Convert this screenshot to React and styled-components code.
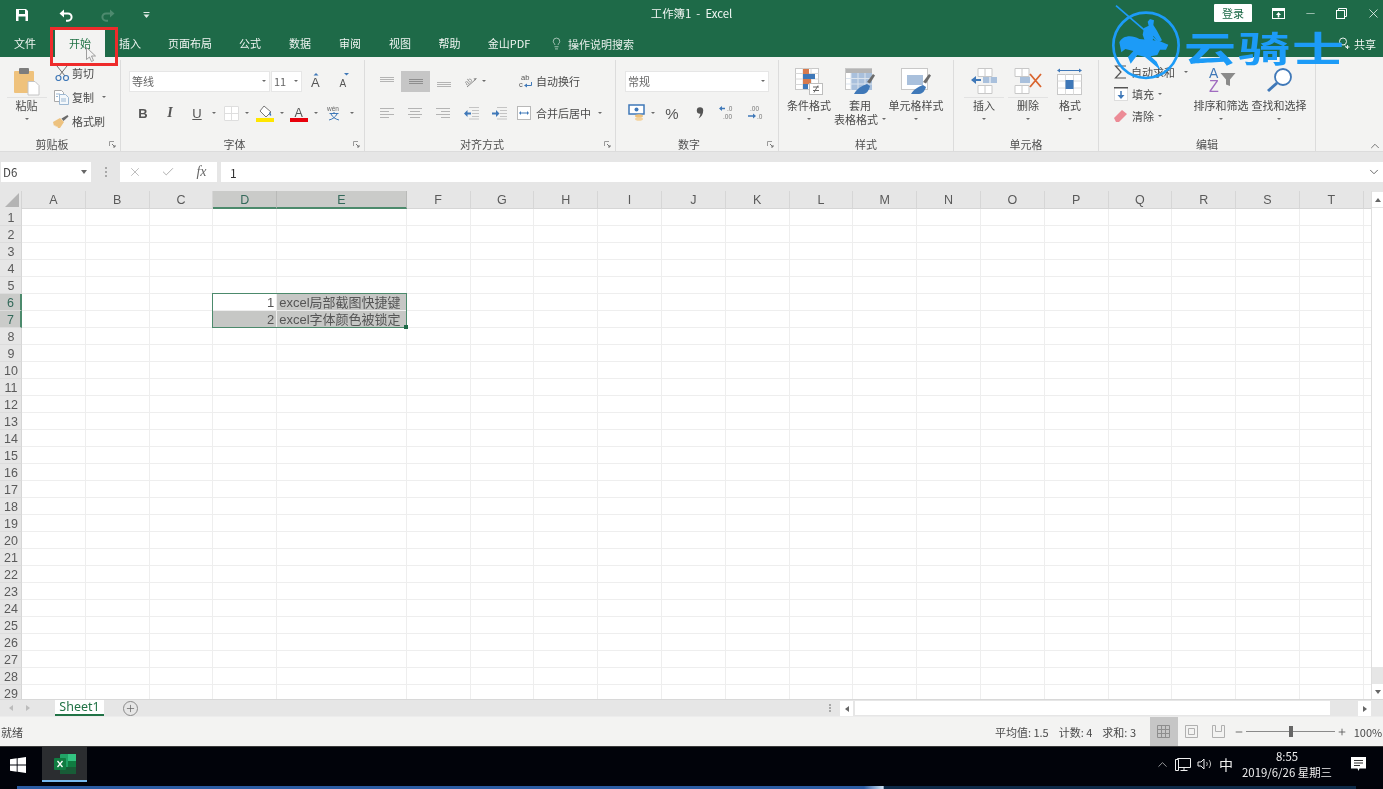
import React from "react";
import styled, { createGlobalStyle } from "styled-components";
import { X, Check, Minus, Plus, Lightbulb, ChevronDown, ChevronUp } from "lucide-react";

const UI_FONT = `"Noto Sans CJK SC", "Noto Sans", sans-serif`;

const GlobalStyle = createGlobalStyle`
  html, body { margin: 0; height: 100%; overflow: hidden; }
  #root { height: 100%; }
  * { box-sizing: border-box; }
  body { font-family: ${UI_FONT}; font-size: 11px; color: #444; }
`;

const Page = styled.div`
  position: relative;
  height: 100%;
  display: flex;
  flex-direction: column;
  overflow: hidden;
  background: #e6e6e6;
  filter: blur(0.35px);
`;

/* title bar */
const TitleBar = styled.div`
  height: 30px;
  flex: none;
  background: #1e6a48;
  color: #fff;
  display: grid;
  grid-template-columns: 1fr auto 1fr;
  align-items: center;
`;

const Qat = styled.div`
  display: flex;
  align-items: center;
  padding-left: 9px;
  height: 26px;
`;

const QatSlot = styled.div`
  width: ${(p) => p.$w}px;
  display: flex;
  justify-content: center;
`;

const DocTitle = styled.div`
  font-size: 11.4px;
  color: #f1f6f3;
  margin-bottom: 4px;
  white-space: pre;
`;

const WinControls = styled.div`
  display: flex;
  align-items: center;
  justify-content: flex-end;
  height: 26px;
  margin: 0 -6px 4px 0;
`;

const LoginBtn = styled.div`
  width: 38px;
  height: 18px;
  background: #fff;
  color: #1e6a48;
  font-size: 11px;
  line-height: 18px;
  text-align: center;
  margin-right: 11px;
  border-radius: 1px;
`;

const WinBtn = styled.div`
  width: 31.5px;
  display: flex;
  justify-content: center;
`;

/* ribbon tabs */
const TabRow = styled.div`
  height: 27px;
  flex: none;
  background: #1e6a48;
  display: flex;
  align-items: stretch;
`;

const Tab = styled.div`
  width: ${(p) => p.$w}px;
  margin-left: ${(p) => p.$ml || 0}px;
  font-size: 11px;
  line-height: 27px;
  text-align: center;
  color: ${(p) => (p.$active ? "#217346" : "#f0f5f2")};
  background: ${(p) => (p.$active ? "#f3f3f2" : "transparent")};
`;

const TellMe = styled.div`
  display: flex;
  align-items: center;
  gap: 5px;
  margin-left: 6px;
  color: #e8f0ec;
  font-size: 11px;
`;

const Share = styled.div`
  margin-left: auto;
  display: flex;
  align-items: center;
  gap: 3px;
  padding-right: 7px;
  color: #f0f5f2;
  font-size: 11px;
`;

/* ribbon */
const Ribbon = styled.div`
  height: 95px;
  flex: none;
  display: flex;
  padding-top: 3px;
  background: #f3f3f2;
  border-bottom: 1px solid #dcdcdc;
`;

const Group = styled.div`
  width: ${(p) => p.$w}px;
  flex: none;
  display: flex;
  flex-direction: column;
  border-right: 1px solid #dcdcdc;
`;

const GroupBody = styled.div`
  flex: 1;
  display: flex;
  padding-left: ${(p) => p.$pl || 0}px;
  min-height: 0;
`;

const GroupFoot = styled.div`
  height: 16px;
  flex: none;
  display: flex;
  align-items: center;
  font-size: 11px;
  color: #505050;
  padding-top: 3px;
`;

const GroupLabel = styled.div`
  flex: 1;
  text-align: center;
  line-height: 13px;
`;

const LauncherSlot = styled.div`
  width: 16px;
  display: flex;
  justify-content: center;
`;

const TwoRows = styled.div`
  display: flex;
  flex-direction: column;
  gap: 10px;
  padding-top: 10px;
`;

const Row = styled.div`
  height: 22px;
  display: flex;
  align-items: center;
  padding-left: ${(p) => p.$pl || 0}px;
`;

const Slot = styled.div`
  width: ${(p) => p.$w}px;
  height: ${(p) => (p.$selected ? 21 : 22)}px;
  flex: none;
  display: flex;
  align-items: center;
  justify-content: center;
  background: ${(p) => (p.$selected ? "#c6c6c6" : "transparent")};
  margin-left: ${(p) => p.$ml || 0}px;
`;

const ComboBox = styled.div`
  width: ${(p) => p.$w}px;
  height: 21px;
  margin-left: ${(p) => p.$ml || 0}px;
  background: #fff;
  border: 1px solid #e6e6e6;
  display: flex;
  align-items: center;
  justify-content: space-between;
  padding: 0 3px 0 2px;
  font-size: 11px;
  color: #666;
`;

const CaretMark = styled.span`
  display: inline-block;
  flex: none;
  width: 0;
  height: 0;
  margin-left: ${(p) => p.$ml || 0}px;
  border-left: 2px solid transparent;
  border-right: 2px solid transparent;
  border-top: 2px solid #6a6a6a;
`;

const SmallText = styled.span`
  font-size: 11px;
  color: #4a4a4a;
  white-space: nowrap;
  margin-left: ${(p) => p.$ml || 0}px;
`;

const BigButton = styled.div`
  width: ${(p) => p.$w}px;
  flex: none;
  display: flex;
  flex-direction: column;
  align-items: center;
  padding-top: 8px;
  font-size: 11px;
  line-height: 14px;
  color: #4a4a4a;
  white-space: nowrap;
`;

const BigIcon = styled.div`
  height: 30px;
  width: ${(p) => (p.$split ? "40px" : "auto")};
  flex: none;
  display: flex;
  align-items: flex-start;
  justify-content: center;
  border-bottom: 1px solid ${(p) => (p.$split ? "#e2e2e2" : "transparent")};
`;

const BigLine = styled.div`
  height: 14px;
  display: flex;
  align-items: center;
  justify-content: center;
`;

const SmallColumn = styled.div`
  width: ${(p) => p.$w}px;
  flex: none;
  margin-left: ${(p) => p.$ml || 0}px;
  padding-top: ${(p) => p.$pt}px;
  display: flex;
  flex-direction: column;
`;

const SmallRow = styled.div`
  height: ${(p) => p.$h}px;
  display: flex;
  align-items: center;
`;

const SmallIcon = styled.div`
  width: ${(p) => p.$w}px;
  display: flex;
  justify-content: center;
  flex: none;
`;

const Collapse = styled.div`
  margin-left: auto;
  align-self: flex-end;
  padding: 0 1px 0 0;
  color: #666;
  height: 12px;
`;

/* formula bar */
const FormulaBar = styled.div`
  height: 39px;
  flex: none;
  padding: 10px 0 9px 1px;
  display: flex;
  align-items: stretch;
  background: #e6e6e6;
`;

const NameBox = styled.div`
  width: 90px;
  background: #fff;
  display: flex;
  align-items: center;
  justify-content: space-between;
  padding: 0 4px 0 2px;
  font-size: 11.5px;
  color: #444;
`;

const Dots = styled.div`
  width: 29px;
  display: flex;
  flex-direction: column;
  gap: 2px;
  align-items: center;
  justify-content: center;
  i { width: 2px; height: 2px; background: #a8a8a8; display: block; }
`;

const FxButtons = styled.div`
  width: 97px;
  background: #fff;
  display: flex;
  align-items: center;
`;

const FxSlot = styled.div`
  width: ${(p) => p.$w}px;
  display: flex;
  justify-content: center;
  color: #a9a9a9;
`;

const FxMark = styled.span`
  font-family: "Liberation Serif", serif;
  font-style: italic;
  font-size: 14px;
  color: #666;
`;

const FormulaInput = styled.div`
  flex: 1;
  margin-left: 4px;
  background: #fff;
  display: flex;
  align-items: center;
  justify-content: space-between;
  padding: 0 2px 0 9px;
  font-size: 12px;
  color: #333;
`;

/* worksheet */
const Sheet = styled.div`
  flex: 1;
  min-height: 0;
  display: flex;
  overflow: hidden;
`;

const GridWrap = styled.div`
  flex: 1;
  min-width: 0;
  overflow: hidden;
  background: #fff;
`;

const CellGrid = styled.div`
  position: relative;
  display: grid;
  grid-template-columns: 22px repeat(3, 63.8px) 63.8px 129.6px repeat(15, 63.8px) 8px;
  grid-template-rows: 18px;
  grid-auto-rows: 17px;
`;

const Corner = styled.div`
  background: #e6e6e6;
  border-right: 1px solid #d4d4d4;
  position: relative;
  &::after {
    content: "";
    position: absolute;
    right: 2px;
    bottom: 2px;
    width: 14px;
    height: 14px;
    background: #b4b4b4;
    clip-path: polygon(100% 0, 100% 100%, 0 100%);
  }
`;

const ColHead = styled.div`
  background: ${(p) => (p.$on ? "#cacbc9" : "#e6e6e6")};
  border-right: 1px solid ${(p) => (p.$on ? "#b9bab8" : "#d6d6d6")};
  border-bottom: ${(p) => (p.$on ? "2px solid #4c8a6c" : "1px solid #d6d6d6")};
  color: ${(p) => (p.$on ? "#33695a" : "#5a5a5a")};
  font-family: "Liberation Sans", sans-serif;
  font-size: 12.5px;
  line-height: 18px;
  text-align: center;
`;

const RowHead = styled.div`
  background: ${(p) => (p.$on ? "#cacbc9" : "#e6e6e6")};
  border-right: ${(p) => (p.$on ? "2px solid #4c8a6c" : "1px solid #d6d6d6")};
  border-bottom: 1px solid #dcdcdc;
  color: ${(p) => (p.$on ? "#33695a" : "#5a5a5a")};
  font-family: "Liberation Sans", sans-serif;
  font-size: 12.5px;
  line-height: 18px;
  padding-left: 1px;
  text-align: center;
`;

const Cell = styled.div`
  background: ${(p) => (p.$fill ? "#c6c7c5" : "#fff")};
  border-right: 1px solid #eeeeee;
  border-bottom: 1px solid #eeeeee;
  font-size: 13px;
  line-height: 18px;
  color: #555;
  white-space: nowrap;
  overflow: hidden;
  padding: 0 2px;
  text-align: ${(p) => (p.$num ? "right" : "left")};
  font-family: "Liberation Sans", "Noto Sans CJK SC", sans-serif;
`;

const Selection = styled.div`
  position: absolute;
  inset: -1px 0 0 -1px;
  grid-column: 5 / 7;
  grid-row: 7 / 9;
  border: 1.5px solid #4c8a6c;
  pointer-events: none;
  &::after {
    content: "";
    position: absolute;
    right: -2px;
    bottom: -2px;
    width: 4px;
    height: 4px;
    background: #1e6a48;
  }
`;

const VScroll = styled.div`
  width: 12px;
  flex: none;
  background: #e6e6e6;
  display: flex;
  flex-direction: column;
  padding-top: 1px;
  border-left: 1px solid #dedede;
`;

const ScrollBtn = styled.div`
  height: ${(p) => p.$h || 15}px;
  width: ${(p) => p.$w || "100%"};
  margin-left: ${(p) => p.$ml || 0}px;
  flex: none;
  background: #fff;
  display: flex;
  align-items: center;
  justify-content: center;
`;

const VThumb = styled.div`
  flex: 1;
  background: #fff;
  margin: 1px 0 17px;
`;

const Tri = styled.span`
  width: 0;
  height: 0;
  display: block;
  flex: none;
  ${(p) =>
    p.$dir === "up" && `border-left:3.5px solid transparent;border-right:3.5px solid transparent;border-bottom:4px solid #666;`}
  ${(p) =>
    p.$dir === "down" && `border-left:3.5px solid transparent;border-right:3.5px solid transparent;border-top:4px solid #666;`}
  ${(p) =>
    p.$dir === "left" && `border-top:3.5px solid transparent;border-bottom:3.5px solid transparent;border-right:4px solid ${p.$c || "#666"};`}
  ${(p) =>
    p.$dir === "right" && `border-top:3.5px solid transparent;border-bottom:3.5px solid transparent;border-left:4px solid ${p.$c || "#666"};`}
`;

/* sheet tabs */
const TabsBar = styled.div`
  height: 17px;
  flex: none;
  display: flex;
  align-items: stretch;
  background: #e6e6e6;
  border-top: 1px solid #d8d8d8;
`;

const NavBtn = styled.div`
  width: ${(p) => p.$w}px;
  display: flex;
  align-items: center;
  justify-content: center;
`;

const SheetTab = styled.div`
  width: 49px;
  background: #fff;
  color: #217346;
  font-family: "Noto Sans", sans-serif;
  font-size: 12.5px;
  line-height: 14px;
  text-align: center;
  border-bottom: 2px solid #217346;
  margin-left: 21px;
`;

const AddSheet = styled.div`
  width: 15px;
  height: 15px;
  border-radius: 50%;
  border: 1px solid #8a8a8a;
  color: #666;
  align-self: center;
  margin-left: 19px;
  display: flex;
  align-items: center;
  justify-content: center;
`;

const HScroll = styled.div`
  display: flex;
  width: 531px;
  margin: 0 12px 0 5px;
  padding: 1px 0;
  align-items: stretch;
`;

const HThumb = styled.div`
  width: 475px;
  margin-left: 2px;
  background: #fff;
`;

const HDots = styled(Dots)`
  width: 11px;
  margin-left: auto;
  gap: 1px;
`;

/* status bar */
const StatusBar = styled.div`
  height: 30px;
  flex: none;
  display: flex;
  align-items: center;
  background: #f3f3f2;
  border-top: 1px solid #ececec;
  padding-left: 1px;
  font-size: 11px;
  color: #4a4a4a;
`;

const StatusRight = styled.div`
  margin-left: auto;
  height: 100%;
  display: flex;
  align-items: center;
`;

const StatValue = styled.span`
  margin-right: ${(p) => p.$mr || 10}px;
`;

const ViewBtn = styled.div`
  width: 27.5px;
  height: 100%;
  display: flex;
  align-items: center;
  justify-content: center;
  background: ${(p) => (p.$on ? "#c6c6c6" : "transparent")};
`;

const ZoomTrack = styled.div`
  position: relative;
  width: 89px;
  height: 1px;
  background: #8a8a8a;
  margin: 0 2px;
`;

const ZoomThumb = styled.div`
  position: absolute;
  left: 43px;
  top: -5px;
  width: 4px;
  height: 11px;
  background: #666;
`;

const ZoomBtn = styled.div`
  color: #555;
  display: flex;
  margin-left: ${(p) => p.$ml || 0}px;
`;

const ZoomText = styled.div`
  width: 30px;
  margin-left: 6px;
  text-align: center;
  font-size: 11px;
`;

/* taskbar */
const Taskbar = styled.div`
  height: 43px;
  flex: none;
  background: #01030a;
  display: flex;
  flex-direction: column;
  border-top: 1px solid #3a3a3a;
`;

const TaskMain = styled.div`
  flex: 1;
  display: flex;
  align-items: stretch;
  color: #eee;
`;

const StartSlot = styled.div`
  width: 36px;
  margin: 0 6px 4px 0;
  display: flex;
  align-items: center;
  justify-content: center;
`;

const AppTile = styled.div`
  width: 45px;
  background: #2b2d30;
  border-bottom: 2px solid #76b9ed;
  display: flex;
  align-items: center;
  justify-content: center;
  margin-bottom: 4px;
`;

const Tray = styled.div`
  margin-left: auto;
  display: flex;
  align-items: center;
  margin-bottom: 5px;
`;

const TraySlot = styled.div`
  width: ${(p) => p.$w}px;
  display: flex;
  justify-content: center;
  font-size: 14px;
  color: #eee;
`;

const Clock = styled.div`
  width: 92px;
  margin-left: 4px;
  text-align: center;
  font-size: 11.4px;
  line-height: 16px;
  color: #eee;
  white-space: nowrap;
`;

const ProgressStrip = styled.div`
  height: 3px;
  flex: none;
  margin-left: 17px;
  background: linear-gradient(
    to right,
    #2b5ca3 0,
    #2b5ca3 62%,
    #cfe4f5 63.4%,
    #0d2a48 63.5%,
    #0d2a48 98%,
    #01030a 98%
  );
`;

/* watermark lying over the top right corner */
const Watermark = styled.div`
  position: absolute;
  left: 1110px;
  top: 3px;
  display: flex;
  align-items: flex-start;
  pointer-events: none;
`;

const WatermarkText = styled.div`
  font-family: "Noto Sans CJK SC", sans-serif;
  font-weight: 700;
  font-size: 52px;
  line-height: 52px;
  color: #1c9bf7;
  margin: 18px 0 0 0;
  transform: scaleY(0.68);
  letter-spacing: 2px;
  white-space: nowrap;
`;

const RedBox = styled.div`
  position: absolute;
  left: 50px;
  top: 27px;
  width: 68px;
  height: 39px;
  border: 3px solid #ee2b2b;
  pointer-events: none;
`;

const PointerMark = styled.div`
  position: absolute;
  left: 86px;
  top: 47px;
  pointer-events: none;
`;

const Svg = ({ w, h, children, ...rest }) => (
  <svg width={w} height={h} viewBox={`0 0 ${w} ${h}`} fill="none" {...rest}>
    {children}
  </svg>
);

const SaveIcon = () => (
  <Svg w={14} h={14}>
    <path d="M1 1h10l2 2v10H1z" fill="#fff" />
    <rect x="4" y="2" width="6" height="4" fill="#1e6a48" />
    <rect x="3.5" y="8.5" width="7" height="4.5" fill="#1e6a48" />
  </Svg>
);

const UndoIcon = ({ color = "#fff" }) => (
  <Svg w={16} h={14}>
    <path d="M4 5.5h6a3.6 3.6 0 0 1 0 7.2H8" stroke={color} strokeWidth="2" />
    <path d="M1.5 5.5 6 1.5v8z" fill={color} />
  </Svg>
);

const RedoIcon = () => (
  <Svg w={16} h={14}>
    <path d="M12 5.5H6a3.6 3.6 0 0 0 0 7.2h2" stroke="#4d8a6e" strokeWidth="2" />
    <path d="M14.5 5.5 10 1.5v8z" fill="#4d8a6e" />
  </Svg>
);

const QatMore = () => (
  <Svg w={7} h={7}>
    <path d="M.5 0h6v1h-6z" fill="#dfe9e4" />
    <path d="M.5 2.500h6L3.500 6z" fill="#dfe9e4" />
  </Svg>
);

const RibbonDisplay = () => (
  <Svg w={13} h={11}>
    <rect x=".5" y=".5" width="12" height="10" stroke="#fff" />
    <rect x="0" y="0" width="13" height="3" fill="#fff" />
    <path d="M6.500 4 9 7H7.300v2.500H5.700V7H4z" fill="#fff" />
  </Svg>
);

const RestoreIcon = () => (
  <Svg w={11} h={11}>
    <rect x=".5" y="2.500" width="8" height="8" stroke="#fff" />
    <path d="M2.500 2.500V.5h8v8h-2" stroke="#fff" />
  </Svg>
);

const ShareIcon = () => (
  <Svg w={13} h={13}>
    <circle cx="5" cy="4.500" r="3.500" stroke="#e8f0ec" />
    <path d="M7 8.500 9 11M9.500 8v4M7.500 10h4" stroke="#e8f0ec" />
  </Svg>
);

const PasteIcon = () => (
  <Svg w={27} h={28}>
    <rect x="1" y="3" width="20" height="22" rx="1" fill="#efc27c" />
    <rect x="6" y="0" width="10" height="6" rx="1" fill="#7d7d7d" />
    <path d="M15 13.500h7l4 4V27H15z" fill="#fff" stroke="#c4c4c4" />
  </Svg>
);

const CutIcon = () => (
  <Svg w={15} h={15}>
    <path d="M2 0 10 10M12 0 4 10" stroke="#6f6f6f" />
    <circle cx="3.500" cy="12" r="2.500" stroke="#3f78b8" strokeWidth="1.200" />
    <circle cx="11" cy="12" r="2.500" stroke="#3f78b8" strokeWidth="1.200" />
  </Svg>
);

const CopyIcon = () => (
  <Svg w={15} h={15}>
    <path d="M.5.5h7l2 2v9H.5z" fill="#fff" stroke="#a9a9a9" />
    <path d="M5.500 4.500h6l3 3v7h-9z" fill="#f4f8fb" stroke="#9db8d2" />
    <path d="M2 4h4M2 6.500h2M7 9h5M7 11h5" stroke="#9db8d2" />
  </Svg>
);

const BrushIcon = () => (
  <Svg w={16} h={13}>
    <path d="M0 7 7 3l4 4-4 6H5l-1-2-1 1-1-2-1 1z" fill="#edc27f" />
    <path d="m8.500 3.500 6-3.500 1 1.500-5 4.500z" fill="#6a6a6a" />
  </Svg>
);

const GrowFont = ({ up }) => (
  <Svg w={16} h={18}>
    <text x={up ? 3 : 4.5} y="15" fontFamily="Liberation Sans" fontSize={up ? 13 : 10} fill="#555">A</text>
    <path d={up ? "M8 1 10.500 3.500H5.500z" : "M9 1h5l-2.500 2.500z"} fill="#3f78b8" />
  </Svg>
);

const Bold = styled.span`
  font-family: "Liberation Sans", sans-serif;
  font-size: 13px;
  font-weight: 700;
  color: #555;
`;

const Italic = styled(Bold)`
  font-family: "Liberation Serif", serif;
  font-style: italic;
  font-size: 14px;
`;

const Under = styled(Bold)`
  font-weight: 400;
  text-decoration: underline;
  font-size: 13px;
`;

const BorderIcon = () => (
  <Svg w={15} h={15}>
    <rect width="15" height="15" fill="#fff" />
    <path d="M.5.5h14v14H.5zM7.500 0v15M0 7.500h15" stroke="#dedede" />
  </Svg>
);

const FillIcon = () => (
  <Svg w={18} h={17}>
    <path d="m8 1 7 6-5 5-6-6z" fill="#fff" stroke="#777" />
    <path d="M13 7c2 1 2.500 2.500 2 4l-1.500-1z" fill="#3f78b8" />
    <rect y="13" width="18" height="4" fill="#ffe600" />
  </Svg>
);

const FontColor = () => (
  <Svg w={18} h={18}>
    <text x="4.500" y="13" fontFamily="Liberation Sans" fontSize="12.500" fill="#555">A</text>
    <rect y="14" width="18" height="4" fill="#e8000b" />
  </Svg>
);

const PhoneticIcon = () => (
  <Svg w={16} h={18}>
    <text x="1" y="7" fontFamily="Liberation Sans" fontSize="6.500" fill="#666">wén</text>
    <path d="M3.500 9.500h9M8 8v1.500M5 10c1.500 3 4 5 8 6M11 10c-1.500 3-4 5-8 6" stroke="#3f78b8" />
  </Svg>
);

const Lines = ({ rows, w = 14, color = "#b4b4b4" }) => (
  <Svg w={14} h={14}>
    {rows.map(([y, x, len]) => (
      <rect key={y} x={x} y={y} width={len || w} height="1" fill={color} />
    ))}
  </Svg>
);

const RotateIcon = () => (
  <Svg w={18} h={18}>
    <text x="3" y="12" fontFamily="Liberation Sans" fontSize="7" fill="#888" transform="rotate(-40 7 9)">ab</text>
    <path d="M6 15 15 7" stroke="#888" />
    <path d="m16 6-3.500.5 1.500 2z" fill="#888" />
  </Svg>
);

const WrapIcon = () => (
  <Svg w={16} h={18}>
    <text x="3" y="8" fontFamily="Liberation Sans" fontSize="7.500" fill="#555">ab</text>
    <text x="1" y="15" fontFamily="Liberation Sans" fontSize="7.500" fill="#555">c</text>
    <path d="M13.500 10v3.500H8" stroke="#3f78b8" />
    <path d="m6 13.500 3-2v4z" fill="#3f78b8" />
  </Svg>
);

const IndentIcon = ({ flip }) => (
  <Svg w={16} h={14}>
    <path d="M6 1.500h10M9 4.500h7M9 7.500h7M9 10.500h7M6 13h10" stroke="#c4c4c4" />
    {flip ? (
      <path d="M1 6.500h4V4l3.500 3.500L5 11V8.500H1z" fill="#3f78b8" />
    ) : (
      <path d="M8 6.500H4.500V4L1 7.500 4.500 11V8.500H8z" fill="#3f78b8" />
    )}
  </Svg>
);

const MergeIcon = () => (
  <Svg w={14} h={14}>
    <rect x=".5" y=".5" width="13" height="13" fill="#fff" stroke="#b8b8b8" />
    <path d="M3 7h8" stroke="#3f78b8" />
    <path d="m2 7 2-2v4zM12 7l-2-2v4z" fill="#3f78b8" />
  </Svg>
);

const MoneyIcon = () => (
  <Svg w={18} h={18}>
    <rect x="1" y="1" width="15" height="9" fill="#fff" stroke="#3f78b8" strokeWidth="1.500" />
    <circle cx="8.500" cy="5.500" r="2" fill="#3f78b8" />
    <ellipse cx="11" cy="12" rx="4" ry="1.800" fill="#efc27c" />
    <ellipse cx="11" cy="15" rx="4" ry="1.800" fill="#f3d3a0" />
  </Svg>
);

const CommaIcon = () => (
  <Svg w={8} h={12}>
    <circle cx="4" cy="3.500" r="3.200" fill="#555" />
    <path d="M7 3.500C7.300 7 5.500 10 2.500 11.500 4 9 4.500 7.500 4.500 5.500z" fill="#555" />
  </Svg>
);

const Percent = styled.span`
  font-family: "Liberation Sans", sans-serif;
  font-size: 15px;
  color: #555;
`;

const DecimalIcon = ({ more }) => (
  <Svg w={20} h={18}>
    {more ? (
      <>
        <path d="M2 4.500h5" stroke="#3f78b8" strokeWidth="1.500" />
        <path d="M1 4.500 4 2v5z" fill="#3f78b8" />
        <text x="9" y="7" fontFamily="Liberation Sans" fontSize="6.500" fill="#777">.0</text>
        <text x="5" y="15" fontFamily="Liberation Sans" fontSize="6.500" fill="#777">.00</text>
      </>
    ) : (
      <>
        <text x="5" y="7" fontFamily="Liberation Sans" fontSize="6.500" fill="#777">.00</text>
        <path d="M3 12h6" stroke="#3f78b8" strokeWidth="1.500" />
        <path d="M11 12 8 9.500v5z" fill="#3f78b8" />
        <text x="12" y="15" fontFamily="Liberation Sans" fontSize="6.500" fill="#777">.0</text>
      </>
    )}
  </Svg>
);

const CondFormat = () => (
  <Svg w={28} h={27}>
    <rect x=".5" y=".5" width="23" height="21" fill="#fff" stroke="#c8c8c8" />
    <path d="M8 .5v21M16 .5v21M.5 5.500h23M.5 11h23M.5 16.500h23" stroke="#d8d8d8" />
    <rect x="8" y="1" width="6" height="5" fill="#d87a4c" />
    <rect x="8" y="6" width="12" height="5" fill="#3f78b8" />
    <rect x="8" y="11" width="8" height="5" fill="#d87a4c" />
    <rect x="8" y="16" width="5" height="5" fill="#3f78b8" />
    <rect x="14.500" y="15.500" width="13" height="11" fill="#fff" stroke="#bdbdbd" />
    <path d="M18 19h6M18 22.500h6M23 17.500l-4 7" stroke="#666" />
  </Svg>
);

const TableFormat = () => (
  <Svg w={30} h={27}>
    <rect x=".5" y=".5" width="26" height="21" fill="#fff" stroke="#c8c8c8" />
    <rect x="1" y="1" width="26" height="4" fill="#b4b4b4" />
    <rect x="6" y="5" width="21" height="17" fill="#a9c0dc" />
    <path d="M6 5v17M13 5v17M20 5v17M1 10.500h26M1 16h26" stroke="#dbe4ee" />
    <path d="m22 14 6-8 2 1.500-5 8z" fill="#6b6b6b" />
    <path d="M9 26c3-6 8-8 13-10l3 2c-1 4-3 8-7 8z" fill="#3f78b8" />
  </Svg>
);

const CellStyle = () => (
  <Svg w={30} h={27}>
    <rect x=".5" y=".5" width="26" height="21" fill="#fff" stroke="#c8c8c8" />
    <rect x="6" y="7" width="16" height="10" fill="#a9c0dc" />
    <path d="m22 14 6-8 2 1.500-5 8z" fill="#6b6b6b" />
    <path d="M10 26c3-5 7-7 12-9l3 2c-1 3-3 7-7 7z" fill="#3f78b8" />
  </Svg>
);

const InsertCells = () => (
  <Svg w={28} h={27}>
    <path d="M8 .5h14v8H8zM15 .5v8M8 17.500h14v8H8zM15 17.500v8" fill="#fff" stroke="#c8c8c8" />
    <rect x="13" y="9" width="14" height="6" fill="#a9c0dc" />
    <path d="M20 9v6" stroke="#fff" />
    <path d="M2 12h9" stroke="#3f78b8" strokeWidth="2" />
    <path d="m1 12 5-4v8z" fill="#3f78b8" />
  </Svg>
);

const DeleteCells = () => (
  <Svg w={28} h={27}>
    <path d="M1 .5h14v8H1zM8 .5v8M1 17.500h14v8H1zM8 17.500v8" fill="#fff" stroke="#c8c8c8" />
    <rect x="6" y="9" width="10" height="6" fill="#a9c0dc" />
    <path d="m16 6 11 13M27 6 16 19" stroke="#d9652f" strokeWidth="1.800" />
  </Svg>
);

const FormatCells = () => (
  <Svg w={26} h={27}>
    <path d="M1 2.500h23" stroke="#3f78b8" />
    <path d="m0 2.500 3-2v4zM25 2.500l-3-2v4z" fill="#3f78b8" />
    <rect x=".5" y="6.500" width="24" height="20" fill="#fff" stroke="#c8c8c8" />
    <path d="M8.500 6.500v20M16.500 6.500v20M.5 13h24M.5 20h24" stroke="#dcdcdc" />
    <rect x="8.500" y="12" width="8" height="9" fill="#3f78b8" />
  </Svg>
);

const SigmaIcon = () => (
  <Svg w={13} h={14}>
    <path d="M12 1H1.500L7 7l-5.500 6H12" stroke="#555" strokeWidth="1.200" />
  </Svg>
);

const FillDown = () => (
  <Svg w={14} h={14}>
    <rect x=".5" y=".5" width="13" height="13" fill="#fff" stroke="#ddd" />
    <rect width="14" height="1.500" fill="#555" />
    <path d="M7 4v6" stroke="#3f78b8" strokeWidth="1.500" />
    <path d="m3.500 8 3.500 4 3.500-4z" fill="#3f78b8" />
  </Svg>
);

const EraserIcon = () => (
  <Svg w={13} h={12}>
    <path d="M0 8 8 0l5 4-8 8H2z" fill="#ec8b96" />
  </Svg>
);

const SortIcon = () => (
  <Svg w={29} h={26}>
    <text x="2" y="10" fontFamily="Liberation Sans" fontSize="14" fill="#3f78b8">A</text>
    <text x="2" y="24" fontFamily="Liberation Sans" fontSize="16" fill="#a06cc0">Z</text>
    <path d="M13.500 5h15L23 11.500V18l-4-1.500v-5z" fill="#8a8a8a" />
  </Svg>
);

const FindIcon = () => (
  <Svg w={27} h={25}>
    <circle cx="17" cy="9" r="8" fill="#fff" stroke="#3f78b8" strokeWidth="1.800" />
    <path d="M2 23 11 15" stroke="#3f78b8" strokeWidth="3" />
  </Svg>
);

const Launcher = () => (
  <Svg w={7} h={7}>
    <path d="M.5 5V.5H5" stroke="#9a9a9a" />
    <path d="m3 3 3 3M6 4v2H4" stroke="#777" />
  </Svg>
);

const NormalView = () => (
  <Svg w={13} h={13}>
    <path d="M.5.5h12v12H.5zM4.500.5v12M8.500.5v12M.5 4.500h12M.5 8.500h12" stroke="#8e8e8e" />
  </Svg>
);

const LayoutView = () => (
  <Svg w={13} h={13}>
    <path d="M.5.5h12v12H.5z" stroke="#b0b0b0" />
    <path d="M3.500 3.500h6v6h-6z" stroke="#b0b0b0" />
  </Svg>
);

const BreakView = () => (
  <Svg w={13} h={13}>
    <path d="M.5 12.500V.5h3v6h6v-6h3v12z" stroke="#b0b0b0" />
  </Svg>
);

const WindowsLogo = () => (
  <Svg w={16} h={16}>
    <path d="M0 2.300 6.700 1.300v6.300H0zM7.600 1.200 16 0v7.600H7.600zM0 8.400h6.700v6.300L0 13.700zM7.600 8.400H16V16l-8.400-1.200z" fill="#fff" />
  </Svg>
);

const ExcelLogo = () => (
  <Svg w={22} h={20}>
    <rect x="6" y="0" width="16" height="20" rx="1" fill="#21a366" />
    <rect x="14" y="0" width="8" height="7" fill="#33c481" />
    <rect x="6" y="13" width="16" height="7" fill="#185c37" />
    <rect x="14" y="7" width="8" height="6" fill="#107c41" />
    <rect x="0" y="4" width="12" height="12" rx="1" fill="#107c41" />
    <path d="m3.500 7 5 6M8.500 7l-5 6" stroke="#fff" strokeWidth="1.300" />
  </Svg>
);

const NetworkIcon = () => (
  <Svg w={16} h={15}>
    <path d="M2.500 1.500h13v9h-13zM9 10.500v3M5.500 13.500h7" stroke="#eee" />
    <path d="M.5 2.500v11h3v-11z" fill="#01030a" stroke="#eee" />
  </Svg>
);

const VolumeIcon = () => (
  <Svg w={16} h={14}>
    <path d="M1 5h3l3-3v10L4 9H1z" stroke="#eee" />
    <path d="M9.500 5c1 1.300 1 2.700 0 4M12 3c2 2.500 2 5.500 0 8" stroke="#bbb" />
  </Svg>
);

const NoticeIcon = () => (
  <Svg w={15} h={15}>
    <path d="M0 0h15v11.500H8.500L7.500 14l-1-2.500H0z" fill="#fff" />
    <path d="M3 3.500h9M3 6h9M3 8.500h6" stroke="#333" />
  </Svg>
);

const KnightMark = () => (
  <svg width="74" height="77" viewBox="30 10 222 231" fill="none">
    <circle cx="138" cy="137" r="98" stroke="#1c9bf7" strokeWidth="8" />
    <path d="M48 18 190 140" stroke="#1c9bf7" strokeWidth="5" />
    <path
      d="M128 105 132 85 146 78 143 66 150 58 162 62 160 76 170 92 186 122 176 128 160 108 158 125 135 125Z"
      fill="#1c9bf7"
    />
    <path
      d="M58 128C66 108 95 104 118 118L160 122 180 125 205 135 198 150 180 150 172 166 152 170 170 186 182 212 166 198 135 172 112 166 92 192 84 172 100 154 76 148 64 158Z"
      fill="#1c9bf7"
    />
  </svg>
);

const columns = ["A", "B", "C", "D", "E", "F", "G", "H", "I", "J", "K", "L", "M", "N", "O", "P", "Q", "R", "S", "T", ""];
const rowCount = 29;
const cellData = {
  "D6": { text: "1", num: true },
  "E6": { text: "excel局部截图快捷键", fill: true },
  "D7": { text: "2", num: true, fill: true },
  "E7": { text: "excel字体颜色被锁定", fill: true },
};

function Worksheet() {
  const rows = Array.from({ length: rowCount }, (_, i) => i + 1);
  return (
    <CellGrid>
      <Corner />
      {columns.map((c, i) => (
        <ColHead key={i} $on={c === "D" || c === "E"}>{c}</ColHead>
      ))}
      {rows.map((r) => (
        <React.Fragment key={r}>
          <RowHead $on={r === 6 || r === 7}>{r}</RowHead>
          {columns.map((c, i) => {
            const d = cellData[c + r];
            return (
              <Cell key={i} $fill={d && d.fill} $num={d && d.num}>
                {d ? d.text : ""}
              </Cell>
            );
          })}
        </React.Fragment>
      ))}
      <Selection />
    </CellGrid>
  );
}

function RibbonGroup({ w, pl, label, launcher, children }) {
  return (
    <Group $w={w}>
      <GroupBody $pl={pl}>{children}</GroupBody>
      <GroupFoot>
        <GroupLabel>{label}</GroupLabel>
        {launcher && (
          <LauncherSlot>
            <Launcher />
          </LauncherSlot>
        )}
      </GroupFoot>
    </Group>
  );
}

export default function App() {
  return (
    <Page>
      <GlobalStyle />
      <TitleBar>
        <Qat>
          <QatSlot $w={26}><SaveIcon /></QatSlot>
          <QatSlot $w={62}><UndoIcon /></QatSlot>
          <QatSlot $w={22}><RedoIcon /></QatSlot>
          <QatSlot $w={54}><QatMore /></QatSlot>
        </Qat>
        <DocTitle>工作簿1  -  Excel</DocTitle>
        <WinControls>
          <LoginBtn>登录</LoginBtn>
          <WinBtn><RibbonDisplay /></WinBtn>
          <WinBtn><Minus size={13} color="#fff" strokeWidth={1} /></WinBtn>
          <WinBtn><RestoreIcon /></WinBtn>
          <WinBtn><X size={15} color="#fff" strokeWidth={1.2} /></WinBtn>
        </WinControls>
      </TitleBar>

      <TabRow>
        <Tab $w={50}>文件</Tab>
        <Tab $w={50} $ml={5} $active>开始</Tab>
        <Tab $w={50}>插入</Tab>
        <Tab $w={70}>页面布局</Tab>
        <Tab $w={50}>公式</Tab>
        <Tab $w={50}>数据</Tab>
        <Tab $w={50}>审阅</Tab>
        <Tab $w={50}>视图</Tab>
        <Tab $w={49}>帮助</Tab>
        <Tab $w={70}>金山PDF</Tab>
        <TellMe>
          <Lightbulb size={13} color="#e8f0ec" strokeWidth={1.2} />
          操作说明搜索
        </TellMe>
        <Share>
          <ShareIcon />
          共享
        </Share>
      </TabRow>

      <Ribbon>
        <RibbonGroup w={121} pl={8} label="剪贴板" launcher>
          <BigButton $w={37}>
            <BigIcon $split>
              <PasteIcon />
            </BigIcon>
            <BigLine>粘贴</BigLine>
            <BigLine><CaretMark /></BigLine>
          </BigButton>
          <SmallColumn $w={60} $ml={8} $pt={1}>
            <SmallRow $h={24}>
              <SmallIcon $w={18}><CutIcon /></SmallIcon>
              <SmallText $ml={1}>剪切</SmallText>
            </SmallRow>
            <SmallRow $h={24}>
              <SmallIcon $w={16}><CopyIcon /></SmallIcon>
              <SmallText $ml={3}>复制</SmallText>
              <CaretMark $ml={8} />
            </SmallRow>
            <SmallRow $h={24}>
              <SmallIcon $w={16}><BrushIcon /></SmallIcon>
              <SmallText $ml={3}>格式刷</SmallText>
            </SmallRow>
          </SmallColumn>
        </RibbonGroup>

        <RibbonGroup w={244} label="字体" launcher>
          <TwoRows>
            <Row $pl={8}>
              <ComboBox $w={141}>等线<CaretMark /></ComboBox>
              <ComboBox $w={31} $ml={1}>11<CaretMark /></ComboBox>
              <Slot $w={27}><GrowFont up /></Slot>
              <Slot $w={28}><GrowFont /></Slot>
            </Row>
            <Row $pl={9}>
              <Slot $w={26}><Bold>B</Bold></Slot>
              <Slot $w={28}><Italic>I</Italic></Slot>
              <Slot $w={26}><Under>U</Under></Slot>
              <Slot $w={8}><CaretMark /></Slot>
              <Slot $w={26}><BorderIcon /></Slot>
              <Slot $w={6}><CaretMark /></Slot>
              <Slot $w={30}><FillIcon /></Slot>
              <Slot $w={4}><CaretMark /></Slot>
              <Slot $w={30}><FontColor /></Slot>
              <Slot $w={4}><CaretMark /></Slot>
              <Slot $w={32}><PhoneticIcon /></Slot>
              <Slot $w={4}><CaretMark /></Slot>
            </Row>
          </TwoRows>
        </RibbonGroup>

        <RibbonGroup w={251} label="对齐方式" launcher>
          <TwoRows>
            <Row $pl={8}>
              <Slot $w={28}><Lines rows={[[3, 0], [5, 0], [7, 0]]} /></Slot>
              <Slot $w={29} $selected><Lines rows={[[5, 0], [7, 0], [9, 0]]} color="#8e8e8e" /></Slot>
              <Slot $w={28}><Lines rows={[[8, 0], [10, 0], [12, 0]]} /></Slot>
              <Slot $w={24}><RotateIcon /></Slot>
              <Slot $w={4}><CaretMark /></Slot>
              <Slot $w={16} $ml={32}><WrapIcon /></Slot>
              <SmallText $ml={2}>自动换行</SmallText>
            </Row>
            <Row $pl={8}>
              <Slot $w={28}><Lines rows={[[2, 0], [5, 0, 9], [8, 0], [11, 0, 9]]} /></Slot>
              <Slot $w={28}><Lines rows={[[2, 0], [5, 2, 10], [8, 0], [11, 2, 10]]} /></Slot>
              <Slot $w={28}><Lines rows={[[2, 0], [5, 5, 9], [8, 0], [11, 5, 9]]} /></Slot>
              <Slot $w={28}><IndentIcon /></Slot>
              <Slot $w={28}><IndentIcon flip /></Slot>
              <Slot $w={20} $ml={1}><MergeIcon /></Slot>
              <SmallText $ml={2}>合并后居中</SmallText>
              <CaretMark $ml={7} />
            </Row>
          </TwoRows>
        </RibbonGroup>

        <RibbonGroup w={163} label="数字" launcher>
          <TwoRows>
            <Row $pl={9}>
              <ComboBox $w={144}>常规<CaretMark /></ComboBox>
            </Row>
            <Row $pl={8}>
              <Slot $w={26}><MoneyIcon /></Slot>
              <Slot $w={6}><CaretMark /></Slot>
              <Slot $w={32}><Percent>%</Percent></Slot>
              <Slot $w={24}><CommaIcon /></Slot>
              <Slot $w={32}><DecimalIcon more /></Slot>
              <Slot $w={22}><DecimalIcon /></Slot>
            </Row>
          </TwoRows>
        </RibbonGroup>

        <RibbonGroup w={175} pl={6} label="样式">
          <BigButton $w={48}>
            <BigIcon><CondFormat /></BigIcon>
            <BigLine>条件格式</BigLine>
            <BigLine><CaretMark /></BigLine>
          </BigButton>
          <BigButton $w={54}>
            <BigIcon><TableFormat /></BigIcon>
            <BigLine>套用</BigLine>
            <BigLine>表格格式<CaretMark $ml={4} /></BigLine>
          </BigButton>
          <BigButton $w={58}>
            <BigIcon><CellStyle /></BigIcon>
            <BigLine>单元格样式</BigLine>
            <BigLine><CaretMark /></BigLine>
          </BigButton>
        </RibbonGroup>

        <RibbonGroup w={145} pl={8} label="单元格">
          <BigButton $w={44}>
            <BigIcon $split><InsertCells /></BigIcon>
            <BigLine>插入</BigLine>
            <BigLine><CaretMark /></BigLine>
          </BigButton>
          <BigButton $w={44}>
            <BigIcon $split><DeleteCells /></BigIcon>
            <BigLine>删除</BigLine>
            <BigLine><CaretMark /></BigLine>
          </BigButton>
          <BigButton $w={40}>
            <BigIcon><FormatCells /></BigIcon>
            <BigLine>格式</BigLine>
            <BigLine><CaretMark /></BigLine>
          </BigButton>
        </RibbonGroup>

        <RibbonGroup w={217} pl={15} label="编辑">
          <SmallColumn $w={78} $pt={1}>
            <SmallRow $h={22}>
              <SmallIcon $w={13}><SigmaIcon /></SmallIcon>
              <SmallText $ml={4}>自动求和</SmallText>
              <CaretMark $ml={9} />
            </SmallRow>
            <SmallRow $h={22}>
              <SmallIcon $w={14}><FillDown /></SmallIcon>
              <SmallText $ml={4}>填充</SmallText>
              <CaretMark $ml={4} />
            </SmallRow>
            <SmallRow $h={22}>
              <SmallIcon $w={13}><EraserIcon /></SmallIcon>
              <SmallText $ml={5}>清除</SmallText>
              <CaretMark $ml={4} />
            </SmallRow>
          </SmallColumn>
          <BigButton $w={58}>
            <BigIcon><SortIcon /></BigIcon>
            <BigLine>排序和筛选</BigLine>
            <BigLine><CaretMark /></BigLine>
          </BigButton>
          <BigButton $w={58}>
            <BigIcon><FindIcon /></BigIcon>
            <BigLine>查找和选择</BigLine>
            <BigLine><CaretMark /></BigLine>
          </BigButton>
        </RibbonGroup>

        <Collapse><ChevronUp size={14} strokeWidth={1.5} /></Collapse>
      </Ribbon>

      <FormulaBar>
        <NameBox>D6<Tri $dir="down" /></NameBox>
        <Dots><i /><i /><i /></Dots>
        <FxButtons>
          <FxSlot $w={30}><X size={14} strokeWidth={1.3} /></FxSlot>
          <FxSlot $w={36}><Check size={14} strokeWidth={1.6} /></FxSlot>
          <FxSlot $w={31}><FxMark>fx</FxMark></FxSlot>
        </FxButtons>
        <FormulaInput>
          1
          <ChevronDown size={14} strokeWidth={1.5} color="#555" />
        </FormulaInput>
      </FormulaBar>

      <Sheet>
        <GridWrap>
          <Worksheet />
        </GridWrap>
        <VScroll>
          <ScrollBtn><Tri $dir="up" /></ScrollBtn>
          <VThumb />
          <ScrollBtn><Tri $dir="down" /></ScrollBtn>
        </VScroll>
      </Sheet>

      <TabsBar>
        <NavBtn $w={21}><Tri $dir="left" $c="#bcbcbc" /></NavBtn>
        <NavBtn $w={13}><Tri $dir="right" $c="#bcbcbc" /></NavBtn>
        <SheetTab>Sheet1</SheetTab>
        <AddSheet><Plus size={11} strokeWidth={1.6} /></AddSheet>
        <HDots><i /><i /><i /></HDots>
        <HScroll>
          <ScrollBtn $w="13px" $h={15}><Tri $dir="left" /></ScrollBtn>
          <HThumb />
          <ScrollBtn $w="13px" $h={15} $ml={28}><Tri $dir="right" /></ScrollBtn>
        </HScroll>
      </TabsBar>

      <StatusBar>
        就绪
        <StatusRight>
          <StatValue>平均值: 1.5</StatValue>
          <StatValue>计数: 4</StatValue>
          <StatValue $mr={14}>求和: 3</StatValue>
          <ViewBtn $on><NormalView /></ViewBtn>
          <ViewBtn><LayoutView /></ViewBtn>
          <ViewBtn><BreakView /></ViewBtn>
          <ZoomBtn $ml={1.5}><Minus size={10} strokeWidth={2} /></ZoomBtn>
          <ZoomTrack><ZoomThumb /></ZoomTrack>
          <ZoomBtn><Plus size={10} strokeWidth={2} /></ZoomBtn>
          <ZoomText>100%</ZoomText>
        </StatusRight>
      </StatusBar>

      <Taskbar>
        <TaskMain>
          <StartSlot><WindowsLogo /></StartSlot>
          <AppTile><ExcelLogo /></AppTile>
          <Tray>
            <TraySlot $w={20}><ChevronUp size={15} strokeWidth={1} /></TraySlot>
            <TraySlot $w={22}><NetworkIcon /></TraySlot>
            <TraySlot $w={21}><VolumeIcon /></TraySlot>
            <TraySlot $w={22}>中</TraySlot>
            <Clock>
              8:55
              <br />
              2019/6/26 星期三
            </Clock>
            <TraySlot $w={50}><NoticeIcon /></TraySlot>
          </Tray>
        </TaskMain>
        <ProgressStrip />
      </Taskbar>

      <RedBox />
      <PointerMark>
        <svg width="11" height="16" viewBox="0 0 11 16">
          <path d="M.5.5v12l3-2.500 2 4.500 2-1-2-4.500h4z" fill="#f4f4f4" stroke="#888" strokeWidth=".8" />
        </svg>
      </PointerMark>
      <Watermark>
        <KnightMark />
        <WatermarkText>云骑士</WatermarkText>
      </Watermark>
    </Page>
  );
}
